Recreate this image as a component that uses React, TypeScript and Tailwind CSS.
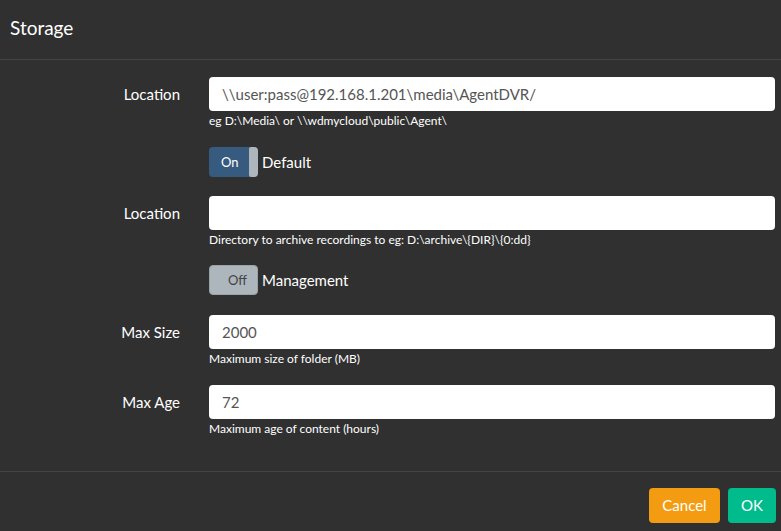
import type { ReactNode } from 'react';

const font = { fontFamily: 'Lato, "Open Sans", sans-serif' };

function Row({ label, children, className = '' }: { label: string; children: ReactNode; className?: string }) {
  return (
    <div className={`flex items-start ${className}`}>
      <div className="w-[180px] shrink-0 h-[34px] flex items-center justify-end text-[15px] text-white">
        {label}
      </div>
      <div className="ml-[29px] flex-1 mr-[6px]">{children}</div>
    </div>
  );
}

function Field({ value, help }: { value: string; help: string }) {
  return (
    <>
      <div className="h-[34px] rounded-[4px] bg-white px-[13px] flex items-center text-[15px] text-[#555]">
        {value}
      </div>
      <div className="mt-[2px] h-[16px] leading-[16px] text-[12px] text-white">{help}</div>
    </>
  );
}

function Toggle({ on, label, className = '' }: { on: boolean; label: string; className?: string }) {
  return (
    <div className={`flex items-center ml-[209px] ${className}`}>
      {on ? (
        <div className="relative w-[49px] h-[30px] rounded-[4px] bg-[#375a7f]">
          <span className="absolute left-[12px] top-0 h-[30px] leading-[30px] text-[13px] text-white">On</span>
          <span className="absolute right-0 top-0 w-[9px] h-[30px] rounded-r-[4px] rounded-l-[2px] bg-[#adb5bd]" />
        </div>
      ) : (
        <div className="relative w-[49px] h-[30px] rounded-[4px] bg-[#adb5bd] border border-[#9aa2aa]">
          <span className="absolute left-[18px] top-0 h-[28px] leading-[28px] text-[13px] text-[#444]">Off</span>
        </div>
      )}
      <span className="ml-[4px] text-[15px] text-white">{label}</span>
    </div>
  );
}

export default function App() {
  return (
    <div className="w-[781px] h-[531px] bg-[#303030] overflow-hidden" style={font}>
      <div className="h-[60px] border-b border-[#444] flex items-center pl-[10px] pb-[2px]">
        <h5 className="text-[19px] text-white">Storage</h5>
      </div>
      <div className="pt-[17px] h-[411px]">
        <Row label="Location">
          <Field value="\\user:pass@192.168.1.201\media\AgentDVR/" help="eg D:\Media\ or \\wdmycloud\public\Agent\" />
        </Row>
        <Toggle on label="Default" className="mt-[18px]" />
        <Row label="Location" className="mt-[19px]">
          <Field value="" help="Directory to archive recordings to eg: D:\archive\{DIR}\{0:dd}" />
        </Row>
        <Toggle on={false} label="Management" className="mt-[17px]" />
        <Row label="Max Size" className="mt-[20px]">
          <Field value="2000" help="Maximum size of folder (MB)" />
        </Row>
        <Row label="Max Age" className="mt-[18px]">
          <Field value="72" help="Maximum age of content (hours)" />
        </Row>
      </div>
      <div className="border-t border-[#444] flex justify-end gap-[8px] pt-[16px] pr-[5px]">
        <button className="w-[71px] h-[35px] rounded-[4px] bg-[#f39c12] text-white text-[15px]">Cancel</button>
        <button className="w-[48px] h-[35px] rounded-[4px] bg-[#00bc8c] text-white text-[15px]">OK</button>
      </div>
    </div>
  );
}
